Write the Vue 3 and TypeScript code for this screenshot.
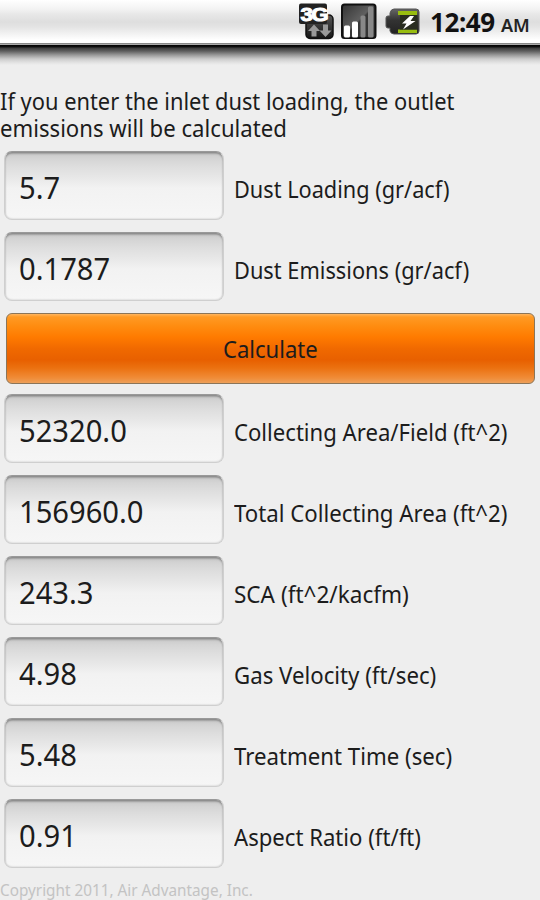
<script setup lang="ts">
interface Field {
  label: string
  value: string
  size: string
}

const inputs: Field[] = [
  { label: 'Dust Loading (gr/acf)', value: '5.7', size: 'a' },
  { label: 'Dust Emissions (gr/acf)', value: '0.1787', size: 'b' },
]

const results: Field[] = [
  { label: 'Collecting Area/Field (ft^2)', value: '52320.0', size: 'c' },
  { label: 'Total Collecting Area (ft^2)', value: '156960.0', size: 'd' },
  { label: 'SCA (ft^2/kacfm)', value: '243.3', size: 'e' },
  { label: 'Gas Velocity (ft/sec)', value: '4.98', size: 'd' },
  { label: 'Treatment Time (sec)', value: '5.48', size: 'd' },
  { label: 'Aspect Ratio (ft/ft)', value: '0.91', size: 'c' },
]
</script>

<template>
  <div class="screen">
    <header class="status">
      <svg class="network" width="36" height="38" viewBox="0 0 36 38">
        <defs>
          <linearGradient id="dark" x1="0" y1="0" x2="0" y2="1">
            <stop offset="0" stop-color="#555" />
            <stop offset="1" stop-color="#151515" />
          </linearGradient>
        </defs>
        <rect x="7" y="12" width="27" height="23.500" rx="4" fill="url(#dark)" stroke="#111" stroke-width="1.500" />
        <rect x="0" y="0.500" width="28" height="20.500" rx="2" fill="#222" />
        <text transform="translate(1.500 18) scale(1.180 1)" class="g3">3G</text>
        <path d="M15 21.500l6 6.500h-3.500v5.500h-5v-5.500h-3.500z" fill="#999" />
        <path d="M26.500 34l6-6.500h-3.500v-6h-5v6h-3.500z" fill="#999" />
      </svg>
      <svg class="signal" width="36" height="38" viewBox="0 0 36 38">
        <defs>
          <linearGradient id="panel" x1="0" y1="0" x2="1" y2="1">
            <stop offset="0" stop-color="#333" />
            <stop offset="0.48" stop-color="#606060" />
            <stop offset="0.52" stop-color="#383838" />
            <stop offset="1" stop-color="#333" />
          </linearGradient>
        </defs>
        <rect x="1" y="1.500" width="33.500" height="33.500" rx="2.500" fill="url(#panel)" stroke="#111" stroke-width="2" />
        <rect x="3" y="22.500" width="6" height="12" rx="1.500" fill="#fff" />
        <rect x="11" y="18.500" width="6" height="16" rx="1.500" fill="#fff" />
        <rect x="19.500" y="12.500" width="5" height="22" rx="1.500" fill="#888" />
        <rect x="27" y="3.500" width="5.500" height="31" rx="1.500" fill="#888" />
      </svg>
      <svg class="battery" width="38" height="28" viewBox="0 0 38 28">
        <defs>
          <linearGradient id="cell" x1="0" y1="0" x2="0" y2="1">
            <stop offset="0" stop-color="#666" />
            <stop offset="0.45" stop-color="#333" />
            <stop offset="1" stop-color="#222" />
          </linearGradient>
        </defs>
        <path d="M10 1H32q3 0 3 3V23q0 3-3 3H10q-3 0-4-3v-3H4q-2 0-2-2v-8q0-2 2-2h2V5q1-4 4-4z" fill="url(#cell)" stroke="#555" />
        <path d="M14 3H33v4H14zM14 21.500H33v3.500H14z" fill="#98bd10" />
        <rect x="16" y="7" width="17.500" height="14.500" fill="#292d20" />
        <path d="M26 8L18 15.500h4.500L19 21.500l12.500-8.500h-5L30 8z" fill="#fff" />
      </svg>
      <span class="clock">12:49</span><span class="ampm">AM</span>
    </header>
    <div class="shade"></div>

    <main>
      <div class="intro">
        <span class="l1">If you enter the inlet dust loading, the outlet</span>
        <span class="l2">emissions will be calculated</span>
      </div>
      <div v-for="f in inputs" :key="f.label" class="row">
        <div class="box"><span class="value">{{ f.value }}</span></div>
        <span class="label" :class="f.size">{{ f.label }}</span>
      </div>
      <div class="action"><button type="button"><span>Calculate</span></button></div>
      <div v-for="f in results" :key="f.label" class="row">
        <div class="box"><span class="value">{{ f.value }}</span></div>
        <span class="label" :class="f.size">{{ f.label }}</span>
      </div>
      <footer><span>Copyright 2011, Air Advantage, Inc.</span></footer>
    </main>
  </div>
</template>

<style>
body {
  margin: 0;
  background: #eee;
}
</style>

<style scoped>
.screen {
  width: 540px;
  height: 900px;
  overflow: hidden;
  background: #eee;
  color: #1c1c1c;
  font-family: "Noto Sans", "Open Sans", sans-serif;
}
.status {
  display: flex;
  box-sizing: border-box;
  height: 43px;
  padding: 3px 0 0 299px;
  background: linear-gradient(#fff 0, #f3f3f3 9px, #e8e8e8 14px, #dedede 22px, #e4e4e4 27px, #fff 40px);
}
.status svg {
  flex: none;
}
.signal {
  margin-left: 6px;
}
.battery {
  margin: 5px 0 0 7px;
}
.g3 {
  font: 700 19px "Liberation Sans", sans-serif;
  letter-spacing: -1.5px;
  fill: #fff;
  stroke: #fff;
  stroke-width: 1px;
}
.clock {
  width: 69px;
  margin-left: 8px;
  font-size: 26px;
  font-weight: 700;
  line-height: 39px;
  letter-spacing: -0.4px;
  color: #111;
}
.ampm {
  margin-left: 2px;
  font-size: 18px;
  font-weight: 600;
  line-height: 45px;
  color: #222;
}
.shade {
  height: 22px;
  background: linear-gradient(#777 0, #aaa 1.5px, #000 2px, #111 4px, #3b3b3b 5px, #5d5d5d 8px, #999 12px, #ccc 16px, #e5e5e5 20px, #eee 22px);
}
main {
  padding-top: 23px;
}
.intro {
  height: 54px;
  font-size: 23px;
  line-height: 27px;
  white-space: nowrap;
}
.intro span {
  display: block;
  width: max-content;
}
.label,
.value,
button span,
footer span {
  display: inline-block;
}
.intro span,
.label,
.value,
button span,
footer span {
  transform: scaleX(var(--fit, 0.94));
  transform-origin: 0 50%;
  white-space: nowrap;
}
.l1 { --fit: 0.95; }
.l2 { --fit: 0.963; }
.label.a { --fit: 0.944; }
.label.b { --fit: 0.947; }
.label.c { --fit: 0.962; }
.label.d { --fit: 0.966; }
.label.e { --fit: 0.98; }
.row {
  display: flex;
  height: 81px;
  padding: 0 4px;
  box-sizing: border-box;
}
.intro + .row {
  margin-top: 9px;
}
.box {
  box-sizing: border-box;
  width: 220px;
  height: 69px;
  padding: 1px 0 0 14px;
  border: 1px solid #cfcfcf;
  border-top-color: #999;
  border-radius: 8px;
  background: linear-gradient(#c8c8c8 0, #d5d5d5 7px, #dedede 15px, #e8e8e8 26px, #f2f2f2 36px, #f6f6f6 100%);
  box-shadow: inset 0 2px 2px -0.5px #858585, inset 0 0 2px #bbb;
}
.value {
  font-size: 31px;
  line-height: 68px;
}
.label {
  margin-left: 10px;
  font-size: 23px;
  line-height: 77px;
}
.action {
  height: 81px;
  padding: 0 5px 0 6px;
}
button {
  display: flex;
  justify-content: center;
  align-items: center;
  width: 529px;
  height: 71px;
  padding: 0;
  border: 1px solid #8b7558;
  border-radius: 6px;
  background: linear-gradient(#ffb55f 0, #ff9a24 3px, #ff8c10 12px, #ff7b00 23px, #f06900 35px, #e86000 46px, #eb7110 54px, #f08c38 64px, #eda05a 69px);
  color: #1c1c1c;
  font-family: inherit;
  font-size: 23px;
}
button span {
  --fit: 0.96;
  transform-origin: 50% 50%;
}
footer {
  font-size: 16px;
  line-height: 20px;
  color: #c3c3c3;
}
footer span {
  --fit: 0.956;
}
</style>
